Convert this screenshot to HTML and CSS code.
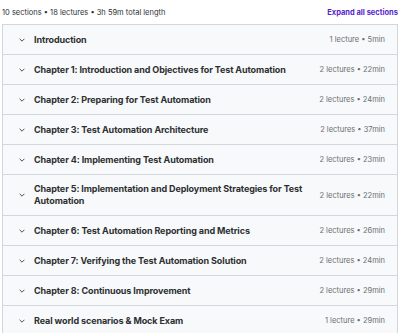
FILE: index.html
```html
<!DOCTYPE html>
<html>
<head lang="en">
  <meta charset="UTF-8">
  <title>Course content</title>
  <link rel="stylesheet" href="styles.css">
</head>
<body>
<div class="curriculum">
  <div class="curriculum-header">
    <span class="curriculum-stats">10 sections • 18 lectures • 3h 59m total length</span>
    <a class="expand-all" href="javascript:void(0);">Expand all sections</a>
  </div>
  <div class="sections">
    <div class="section">
      <svg class="chevron" viewBox="0 0 10 6"><path d="M1 1l4 4 4-4"/></svg>
      <span class="section-title">Introduction</span>
      <span class="section-meta">1 lecture • 5min</span>
    </div>
    <div class="section">
      <svg class="chevron" viewBox="0 0 10 6"><path d="M1 1l4 4 4-4"/></svg>
      <span class="section-title">Chapter 1: Introduction and Objectives for Test Automation</span>
      <span class="section-meta">2 lectures • 22min</span>
    </div>
    <div class="section">
      <svg class="chevron" viewBox="0 0 10 6"><path d="M1 1l4 4 4-4"/></svg>
      <span class="section-title">Chapter 2: Preparing for Test Automation</span>
      <span class="section-meta">2 lectures • 24min</span>
    </div>
    <div class="section">
      <svg class="chevron" viewBox="0 0 10 6"><path d="M1 1l4 4 4-4"/></svg>
      <span class="section-title">Chapter 3: Test Automation Architecture</span>
      <span class="section-meta">2 lectures • 37min</span>
    </div>
    <div class="section">
      <svg class="chevron" viewBox="0 0 10 6"><path d="M1 1l4 4 4-4"/></svg>
      <span class="section-title">Chapter 4: Implementing Test Automation</span>
      <span class="section-meta">2 lectures • 23min</span>
    </div>
    <div class="section">
      <svg class="chevron" viewBox="0 0 10 6"><path d="M1 1l4 4 4-4"/></svg>
      <span class="section-title">Chapter 5: Implementation and Deployment Strategies for Test Automation</span>
      <span class="section-meta">2 lectures • 22min</span>
    </div>
    <div class="section">
      <svg class="chevron" viewBox="0 0 10 6"><path d="M1 1l4 4 4-4"/></svg>
      <span class="section-title">Chapter 6: Test Automation Reporting and Metrics</span>
      <span class="section-meta">2 lectures • 26min</span>
    </div>
    <div class="section">
      <svg class="chevron" viewBox="0 0 10 6"><path d="M1 1l4 4 4-4"/></svg>
      <span class="section-title">Chapter 7: Verifying the Test Automation Solution</span>
      <span class="section-meta">2 lectures • 24min</span>
    </div>
    <div class="section">
      <svg class="chevron" viewBox="0 0 10 6"><path d="M1 1l4 4 4-4"/></svg>
      <span class="section-title">Chapter 8: Continuous Improvement</span>
      <span class="section-meta">2 lectures • 29min</span>
    </div>
    <div class="section">
      <svg class="chevron" viewBox="0 0 10 6"><path d="M1 1l4 4 4-4"/></svg>
      <span class="section-title">Real world scenarios &amp; Mock Exam</span>
      <span class="section-meta">1 lecture • 29min</span>
    </div>
  </div>
</div>
</body>
</html>
```

FILE: styles.css
```css
body {
  margin: 0;
  background: #ffffff;
  font-family: Inter, "Liberation Sans", sans-serif;
  color: #2d2f31;
}

.curriculum {
  padding: 0 2px 0 2px;
}

.curriculum-header {
  display: flex;
  justify-content: space-between;
  align-items: center;
  height: 24px;
}

.curriculum-stats {
  font-size: 7.5px;
  color: #2d2f31;
}

.expand-all {
  font-size: 7.5px;
  font-weight: 700;
  color: #5624d0;
  text-decoration: none;
}

.sections {
  border: 1px solid #d1d7dc;
  border-bottom: none;
}

.section {
  display: flex;
  align-items: center;
  min-height: 30px;
  padding: 0 12px 0 16px;
  background: #f7f9fa;
  border-bottom: 1px solid #d1d7dc;
  box-sizing: border-box;
}

.chevron {
  width: 6px;
  height: 4px;
  flex: none;
  fill: none;
  stroke: #2d2f31;
  stroke-width: 1.4;
  margin-right: 9px;
}

.section-title {
  flex: 1;
  font-size: 9px;
  font-weight: 700;
  letter-spacing: -0.1px;
  line-height: 12px;
  padding: 8px 0;
}

.section-meta {
  flex: none;
  font-size: 7.5px;
  color: #6a6f73;
  margin-left: 8px;
}
```
